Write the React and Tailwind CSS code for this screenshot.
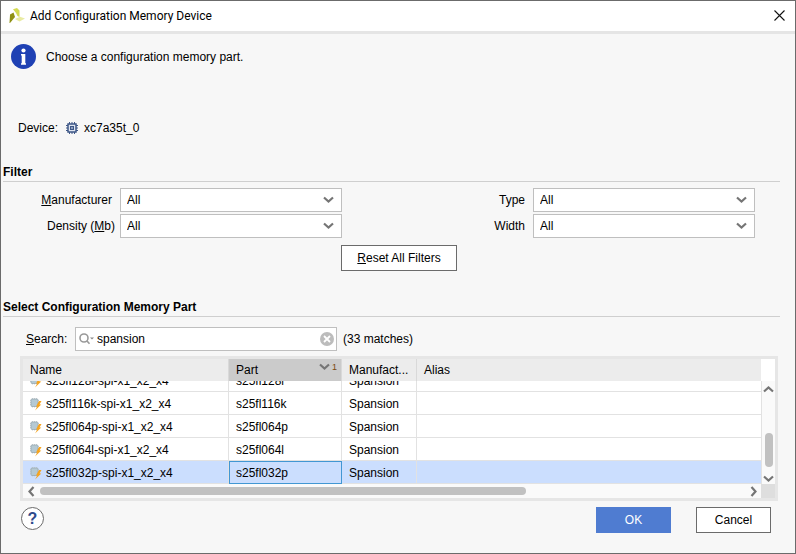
import React from "react";

const parts = ["s25fl128l", "s25fl116k", "s25fl064p", "s25fl064l", "s25fl032p"];
const selectedPart = "s25fl032p";

function Chevron({ className = "", d = "M1 1.5 L5.5 5.5 L10 1.5" }) {
  return (
    <svg width="11" height="8" viewBox="0 0 11 8" className={className} fill="none" stroke="#757575" strokeWidth="2.2" aria-hidden="true">
      <path d={d} />
    </svg>
  );
}

function SideChevron({ d }) {
  return (
    <svg width="8" height="11" viewBox="0 0 8 11" fill="none" stroke="#757575" strokeWidth="2.2" aria-hidden="true">
      <path d={d} />
    </svg>
  );
}

function VivadoLogo() {
  return (
    <svg width="16" height="16" viewBox="0 0 16 16" aria-hidden="true">
      <path d="M4 1.2 L8 0 L10.5 2.5 L10.5 9 L8.5 8 L7 5 Z" fill="#d3da52" />
      <path d="M1 6.5 L4.5 4.5 L6 9 L1 15 L0.5 15 Z" fill="#8f9113" />
      <path d="M6 11 L11 8.8 L16 10.5 L10.5 13.5 Z" fill="#e9eba2" />
    </svg>
  );
}

function InfoIcon() {
  return (
    <svg width="25" height="25" viewBox="0 0 25 25" aria-hidden="true">
      <circle cx="12.5" cy="12.5" r="12.5" fill="#1f41b4" />
      <circle cx="12.5" cy="6.5" r="2.1" fill="#fff" />
      <path d="M10 10 H14.3 V19.3 H15 V20.8 H10 V19.3 H10.7 V11.4 H10 Z" fill="#fff" />
    </svg>
  );
}

function ChipIcon() {
  return (
    <svg width="12" height="12" viewBox="0 0 12 12" fill="none" stroke="#3e5787" aria-hidden="true">
      <path d="M3.5 0V2M6 0V2M8.5 0V2M3.5 10V12M6 10V12M8.5 10V12M0 3.5H2M0 6H2M0 8.5H2M10 3.5H12M10 6H12M10 8.5H12" />
      <rect x="2" y="2" width="8" height="8" strokeWidth="1.5" fill="#dfe5f0" />
      <rect x="4.5" y="4.5" width="3" height="3" fill="#8ea0c0" />
    </svg>
  );
}

function FlashIcon() {
  return (
    <svg width="12" height="13" viewBox="0 0 12 13" className="shrink-0" aria-hidden="true">
      <path d="M2.5 0V9.5M4.5 0V9.5M6.5 0V9.5M0 2.5H9M0 4.5H9M0 6.5H9" stroke="#c9d1d5" />
      <rect x="1" y="1" width="7" height="7.5" rx="1" fill="#b5c9d3" stroke="#9aa9b1" strokeWidth="0.8" />
      <path d="M9 3 H11.5 L9.5 6.5 H11.3 L5 12.5 L7.4 8.5 H6 Z" fill="#f7a41d" />
    </svg>
  );
}

function Filter({ id, label, pad = "pr-2" }) {
  return (
    <>
      <label htmlFor={id} className={"text-right " + pad}>{label}</label>
      <div className="relative">
        <select id={id} className="block h-6 w-full appearance-none border border-[#bfbfbf] bg-white pl-1.5 pr-6 leading-4 text-black outline-none">
          <option>All</option>
        </select>
        <Chevron className="pointer-events-none absolute right-2 top-2" />
      </div>
    </>
  );
}

function SectionTitle({ children }) {
  return <h2 className="mr-[15px] border-b border-[#cfcfcf] pb-px font-bold leading-4">{children}</h2>;
}

function Columns() {
  return (
    <colgroup>
      <col className="w-[206px]" />
      <col className="w-[113px]" />
      <col className="w-[75px]" />
      <col />
    </colgroup>
  );
}

const cell = "border-r border-b border-[#e2e2e2] pl-[7px] pt-0.5";

export default function App() {
  return (
    <div className="flex min-h-screen flex-col border border-[#6b6b6b] bg-[#f7f7f7] font-['Liberation_Sans',Arial,sans-serif] text-[12px] leading-4 text-black">
      <header className="flex h-[33px] items-center border-b-3 border-[#e5e5e5] bg-white pl-2 pr-2.5">
        <VivadoLogo />
        <h1 className="ml-[5px] flex-1 font-[Roboto,'Open_Sans',sans-serif] text-[12px]">Add Configuration Memory Device</h1>
        <button type="button" aria-label="Close" className="mb-0.5">
          <svg width="11" height="11" viewBox="0 0 11 11" className="block" stroke="#111" strokeWidth="1.1"><path d="M0.5 0.5L10.5 10.5M10.5 0.5L0.5 10.5" /></svg>
        </button>
      </header>

      <main className="flex flex-col pl-0.5">
        <div className="flex items-center gap-2.5 pl-2 pt-2.5">
          <InfoIcon />
          <p>Choose a configuration memory part.</p>
        </div>

        <div className="mt-[51px] flex items-center pl-[15px]">
          <span>Device:</span>
          <span className="ml-2 mr-1.5"><ChipIcon /></span>
          <span>xc7a35t_0</span>
        </div>

        <section className="mt-7">
          <SectionTitle>Filter</SectionTitle>
          <div className="mt-1.5 grid grid-cols-[117px_1fr_191px_1fr] items-center gap-y-0.5 pr-10">
            <Filter id="manufacturer" label={<><u>M</u>anufacturer</>} />
            <Filter id="type" label="Type" />
            <Filter id="density" label={<>Density (<u>M</u>b)</>} pad="pr-[5px]" />
            <Filter id="width" label="Width" />
          </div>
          <div className="mt-[7px] flex justify-center">
            <button type="button" className="h-[26px] w-[116px] border border-[#6b6b6b] bg-white"><u>R</u>eset All Filters</button>
          </div>
        </section>

        <section className="mt-7">
          <SectionTitle>Select Configuration Memory Part</SectionTitle>
          <div className="mt-2.5 flex items-center pl-[23px]">
            <label htmlFor="search" className="w-[49px]"><u>S</u>earch:</label>
            <div className="flex h-6 w-[262px] items-center border border-[#bfbfbf] bg-white pl-[3px] pr-0.5">
              <svg width="16" height="12" viewBox="0 0 16 12" fill="none" stroke="#999" strokeWidth="1.6" aria-hidden="true">
                <circle cx="5" cy="5" r="4" />
                <path d="M7.8 7.8L10.5 10.8" />
                <path d="M11 4.5H15L13 6.5Z" fill="#888" stroke="none" />
              </svg>
              <input id="search" type="text" defaultValue="spansion" className="ml-0.5 min-w-0 flex-1 bg-transparent outline-none" />
              <button type="button" aria-label="Clear search">
                <svg width="14" height="14" viewBox="0 0 14 14" className="block"><circle cx="7" cy="7" r="7" fill="#bcbcbc" /><path d="M4 4L10 10M10 4L4 10" stroke="#fff" strokeWidth="1.8" /></svg>
              </button>
            </div>
            <span className="ml-1.5">(33 matches)</span>
          </div>

          <div className="mx-[17px] mt-[5px] border-3 border-[#e6e6e6] bg-white">
            <div className="pr-3.5">
              <table className="w-full table-fixed border-separate border-spacing-0 text-left">
                <Columns />
                <thead>
                  <tr className="h-[22px] bg-[#ececec]">
                    <th className="border-r border-[#d9d9d9] pl-[7px] font-normal">Name</th>
                    <th className="border-r border-[#d9d9d9] bg-[#cbcbcb] pl-[7px] pr-1 font-normal" aria-sort="descending">
                      <div className="flex items-center">
                        <span className="flex-1">Part</span>
                        <Chevron className="mb-1.5" />
                        <span className="mb-1.5 ml-0.5 text-[9px] leading-3 text-[#7a4a10]">1</span>
                      </div>
                    </th>
                    <th className="border-r border-[#d9d9d9] pl-[7px] font-normal">Manufact...</th>
                    <th className="pl-[7px] font-normal">Alias</th>
                  </tr>
                </thead>
              </table>
            </div>
            <div className="flex h-[103px]">
              <div className="flex min-w-0 flex-1 flex-col justify-end overflow-hidden">
                <table className="w-full shrink-0 table-fixed border-separate border-spacing-0">
                  <Columns />
                  <tbody>
                    {parts.map((part) => {
                      const selected = part === selectedPart;
                      return (
                        <tr key={part} className={selected ? "h-[23px] bg-[#cbdefe]" : "h-[23px]"} aria-selected={selected}>
                          <td className={cell}>
                            <div className="flex items-center gap-1"><FlashIcon /><span>{part}-spi-x1_x2_x4</span></div>
                          </td>
                          <td className={selected ? "border border-[#4297d3] pl-1.5" : cell}>{part}</td>
                          <td className={cell}>Spansion</td>
                          <td className="border-b border-[#e2e2e2]" />
                        </tr>
                      );
                    })}
                  </tbody>
                </table>
              </div>
              <div className="flex w-3.5 flex-col items-center border-l border-[#e2e2e2] bg-[#fafafa] pt-1">
                <Chevron d="M1 6.5 L5.5 2.5 L10 6.5" />
                <div className="mt-10 h-[34px] w-2 rounded-full bg-[#c1c1c1]" />
                <Chevron className="mt-2" />
              </div>
            </div>
            <div className="flex h-3.5">
              <div className="flex min-w-0 flex-1 items-center bg-[#fafafa] pl-1 pr-[3px]">
                <SideChevron d="M6.5 1 L2.5 5.5 L6.5 10" />
                <div className="mx-[5px] flex-1"><div className="h-2 w-[69%] rounded-full bg-[#c1c1c1]" /></div>
                <SideChevron d="M1.5 1 L5.5 5.5 L1.5 10" />
              </div>
              <div className="w-3.5 bg-[#dedede]" />
            </div>
          </div>
        </section>

        <footer className="mt-1.5 flex items-center pl-[18px] pr-6">
          <button type="button" aria-label="Help" className="mb-[3px] flex size-[23px] items-center justify-center rounded-full border border-[#6b6b6b] bg-white text-[16px] font-bold text-[#2f4b8c]">?</button>
          <button type="button" className="ml-auto h-[26px] w-[75px] bg-[#4f7cd1] text-white">OK</button>
          <button type="button" className="ml-[25px] h-[26px] w-[75px] border border-[#6b6b6b] bg-white">Cancel</button>
        </footer>
      </main>
    </div>
  );
}
